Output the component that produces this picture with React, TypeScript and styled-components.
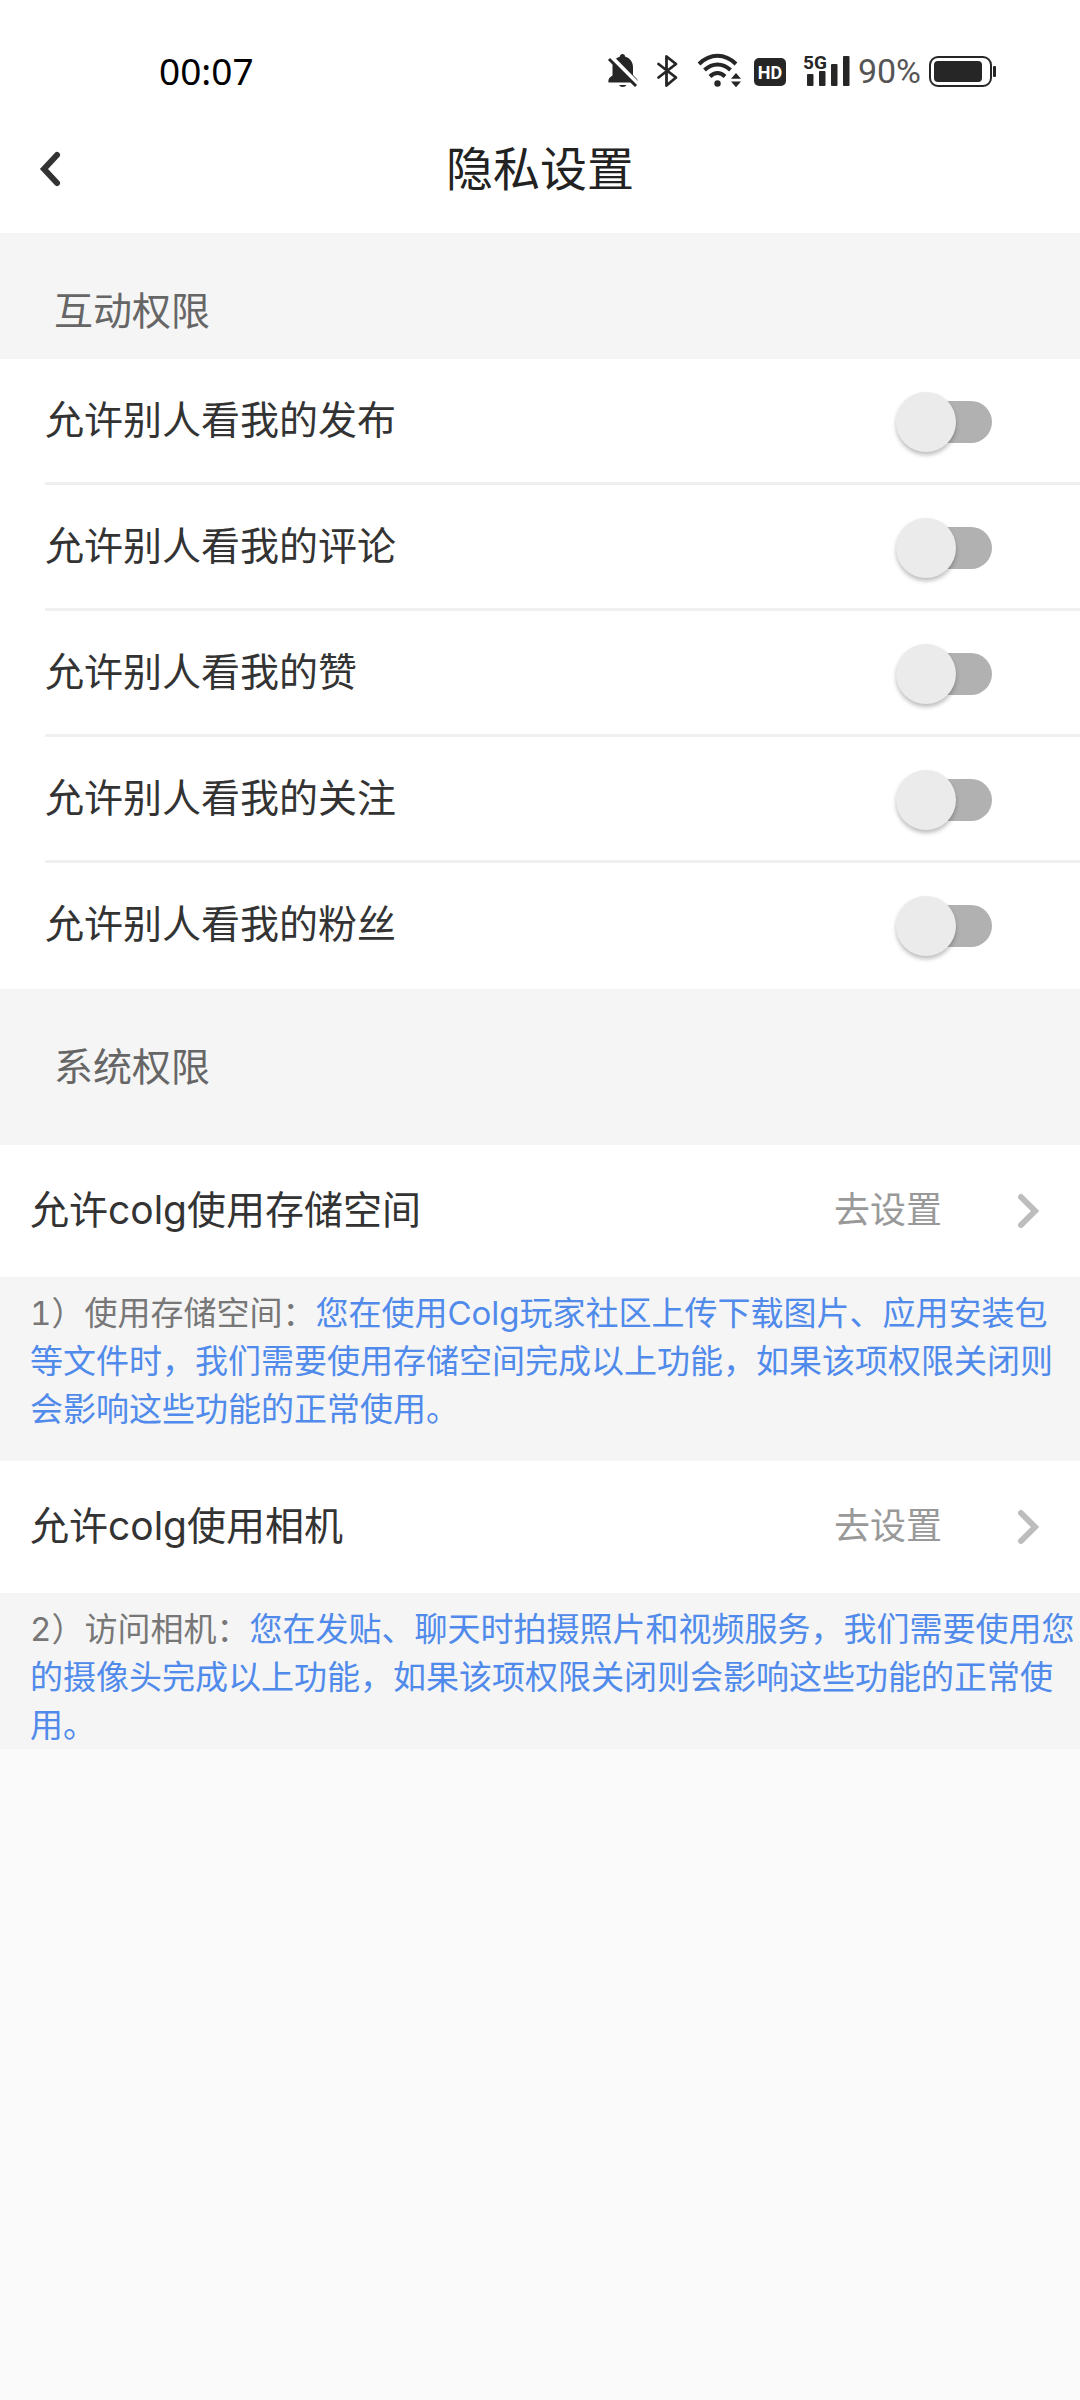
import React from "react";
import styled, { createGlobalStyle } from "styled-components";

const GlobalStyle = createGlobalStyle`
  *, *::before, *::after {
    box-sizing: border-box;
  }
  body {
    margin: 0;
    background: #fafafa;
    color: #333333;
    font-family: Inter, "Noto Sans CJK SC", sans-serif;
  }
`;

const StatusBar = styled.div`
  display: flex;
  align-items: center;
  justify-content: space-between;
  padding: 46px 84px 10px 159px;
  background: #ffffff;
`;

const Clock = styled.time`
  font-family: "Noto Sans", sans-serif;
  font-size: 37px;
  line-height: 50px;
  color: #000000;
`;

const StatusIcons = styled.div`
  display: flex;
  align-items: center;
  gap: 8px;
  color: #262626;

  svg {
    display: block;
    flex: none;
  }
`;

const BatteryLevel = styled.span`
  font-family: Roboto, sans-serif;
  font-size: 34px;
  line-height: 40px;
  color: #555555;
`;

const Header = styled.header`
  display: grid;
  grid-template-columns: 100px 1fr 100px;
  align-items: center;
  padding: 31px 0 32px;
  background: #ffffff;
`;

const BackButton = styled.button`
  display: flex;
  justify-content: center;
  padding: 12px 0;
  border: 0;
  background: none;
  color: #333333;
  cursor: pointer;
`;

const Title = styled.h1`
  margin: 0;
  font-size: 47px;
  font-weight: 400;
  line-height: 64px;
  text-align: center;
  color: #222222;
`;

const SectionTitle = styled.h2<{ $bottom: number }>`
  margin: 0;
  padding: 54px 54px ${(p) => p.$bottom}px;
  background: #f5f5f5;
  font-size: 39px;
  font-weight: 400;
  line-height: 48px;
  color: #666666;
`;

const List = styled.ul`
  margin: 0;
  padding: 0 0 0 45px;
  list-style: none;
  background: #ffffff;
`;

const SwitchRow = styled.li`
  display: flex;
  align-items: center;
  justify-content: space-between;
  padding: 33px 88px 33px 0;
  box-shadow: inset 0 -3px #f0f0f0;

  &:last-child {
    box-shadow: none;
  }
`;

const SwitchLabel = styled.label`
  flex: 1;
  padding: 4px 0 8px;
  font-size: 39px;
  line-height: 48px;
  cursor: pointer;
`;

const Switch = styled.input`
  appearance: none;
  display: grid;
  align-items: center;
  width: 96px;
  height: 60px;
  margin: 0;
  cursor: pointer;

  &::before,
  &::after {
    content: "";
    grid-area: 1 / 1;
  }
  &::before {
    justify-self: end;
    width: 84px;
    height: 42px;
    border-radius: 21px;
    background: #b1b1b1;
  }
  &::after {
    width: 60px;
    height: 60px;
    border-radius: 50%;
    background: #ebebeb;
    box-shadow: 0 3px 4px rgba(0, 0, 0, 0.26);
  }
  &:checked::before {
    background: #a9c6f5;
  }
  &:checked::after {
    justify-self: end;
    background: #508aeb;
  }
`;

const PermissionLink = styled.a`
  display: flex;
  align-items: center;
  padding: 41px 40px 43px 30px;
  background: #ffffff;
  color: #333333;
  text-decoration: none;
  font-size: 39px;
  line-height: 48px;
`;

const PermissionName = styled.span`
  flex: 1;
`;

const PermissionAction = styled.span`
  margin-right: 75px;
  font-size: 36px;
  color: #999999;
`;

const Description = styled.p<{ $bottom: number }>`
  margin: 0;
  padding: 12px 3px ${(p) => p.$bottom}px 30px;
  background: #f5f5f5;
  font-size: 33px;
  font-variant-numeric: tabular-nums;
  line-height: 48px;
  color: #777777;
`;

const Purpose = styled.span`
  color: #508aeb;
`;

const BellOffIcon = () => (
  <svg width="40" height="36" viewBox="602 54 40 36" fill="currentColor" aria-hidden="true">
    <path d="M621 57.500 a2.500 2.500 0 0 1 5 0 c5 1.500 8 5.500 8 10.500 v8 l3.500 3.500 q1.500 1.500 1.500 4 h-29.500 q-1 -4.500 4 -7 v-9 c0 -5 3 -8.500 7.500 -10z" />
    <path d="M620 86 h7.500 a4 3 0 0 1 -7.500 0z" />
    <path d="M612 57.500 L640 86" stroke="#ffffff" strokeWidth="4" />
    <path d="M610 60 L637 87" stroke="currentColor" strokeWidth="3" />
  </svg>
);

const BluetoothIcon = () => (
  <svg width="39" height="36" viewBox="650 54 39 36" fill="none" stroke="currentColor" strokeWidth="2.800" strokeLinejoin="round" strokeLinecap="round" aria-hidden="true">
    <path d="M659.500 65 L677 78.500 L667.500 86.500 V57.500 L677 65 L659.500 78.500" />
  </svg>
);

const WifiIcon = () => (
  <svg width="46" height="36" viewBox="697 54 46 36" fill="none" stroke="currentColor" strokeWidth="4" aria-hidden="true">
    <path d="M700 65 Q708.500 56.800 718.500 56.800 Q728.500 56.800 737 65" />
    <path d="M705.500 71 Q711.500 65.500 718.500 65.500 Q725.500 65.500 731.500 71" />
    <path d="M711 77.500 Q714.500 74 718.500 74 Q722.500 74 726 77.500" />
    <circle cx="718.500" cy="84.500" r="3.200" fill="currentColor" stroke="none" />
    <path d="M732 79.800 L737 74 L742 79.800z M732 82.500 L737 88.300 L742 82.500z" fill="currentColor" stroke="none" />
  </svg>
);

const HdIcon = () => (
  <svg width="44" height="36" viewBox="751 54 44 36" aria-hidden="true">
    <rect x="755" y="59" width="32" height="28" rx="5" fill="currentColor" />
    <text x="771" y="80" textAnchor="middle" fontFamily="Roboto, sans-serif" fontWeight="700" fontSize="18" fill="#ffffff">HD</text>
  </svg>
);

const SignalIcon = () => (
  <svg width="48" height="48" viewBox="802 48 48 48" fill="currentColor" aria-hidden="true">
    <rect x="807" y="75" width="6.500" height="12" rx="1" />
    <rect x="819" y="72" width="6.500" height="15" rx="1" />
    <rect x="831" y="65" width="6.500" height="22" rx="1" />
    <rect x="843" y="57" width="6.500" height="30" rx="1" />
    <text x="803" y="70" fontFamily="Roboto, sans-serif" fontWeight="700" fontSize="19">5G</text>
  </svg>
);

const BatteryIcon = () => (
  <svg width="67" height="36" viewBox="929 54 67 36" aria-hidden="true">
    <rect x="930" y="58" width="61" height="29" rx="8" fill="none" stroke="currentColor" strokeWidth="2" />
    <rect x="934" y="62" width="48" height="21" rx="4" fill="currentColor" />
    <rect x="993" y="67" width="3" height="11" rx="1" fill="currentColor" />
  </svg>
);

const BackIcon = () => (
  <svg width="24" height="40" viewBox="0 0 24 40" fill="none" stroke="currentColor" strokeWidth="6" strokeLinecap="round" strokeLinejoin="miter" aria-hidden="true">
    <path d="M19 6 L6 20 L19 34" />
  </svg>
);

const ForwardIcon = () => (
  <svg width="23" height="38" viewBox="0 0 23 38" fill="none" stroke="#bdbdbd" strokeWidth="6" strokeLinecap="round" aria-hidden="true">
    <path d="M4 6 L18 20 L4 34" />
  </svg>
);

const interactions = ["发布", "评论", "赞", "关注", "粉丝"];

const permissions = [
  {
    name: "允许colg使用存储空间",
    label: "1）使用存储空间：",
    purpose:
      "您在使用Colg玩家社区上传下载图片、应用安装包等文件时，我们需要使用存储空间完成以上功能，如果该项权限关闭则会影响这些功能的正常使用。",
  },
  {
    name: "允许colg使用相机",
    label: "2）访问相机：",
    purpose:
      "您在发贴、聊天时拍摄照片和视频服务，我们需要使用您的摄像头完成以上功能，如果该项权限关闭则会影响这些功能的正常使用。",
  },
];

export default function App() {
  return (
    <>
      <GlobalStyle />
      <StatusBar>
        <Clock>00:07</Clock>
        <StatusIcons>
          <BellOffIcon />
          <BluetoothIcon />
          <WifiIcon />
          <HdIcon />
          <SignalIcon />
          <BatteryLevel>90%</BatteryLevel>
          <BatteryIcon />
        </StatusIcons>
      </StatusBar>
      <Header>
        <BackButton type="button" aria-label="返回">
          <BackIcon />
        </BackButton>
        <Title>隐私设置</Title>
      </Header>
      <main lang="zh-CN">
        <SectionTitle $bottom={24}>互动权限</SectionTitle>
        <List>
          {interactions.map((item, index) => (
            <SwitchRow key={item}>
              <SwitchLabel htmlFor={`interaction-${index}`}>允许别人看我的{item}</SwitchLabel>
              <Switch type="checkbox" role="switch" id={`interaction-${index}`} />
            </SwitchRow>
          ))}
        </List>
        <SectionTitle $bottom={54}>系统权限</SectionTitle>
        {permissions.map((item, index) => (
          <section key={item.name}>
            <PermissionLink href="#settings">
              <PermissionName>{item.name}</PermissionName>
              <PermissionAction>去设置</PermissionAction>
              <ForwardIcon />
            </PermissionLink>
            <Description $bottom={index < permissions.length - 1 ? 28 : 0}>
              {item.label}
              <Purpose>{item.purpose}</Purpose>
            </Description>
          </section>
        ))}
      </main>
    </>
  );
}
